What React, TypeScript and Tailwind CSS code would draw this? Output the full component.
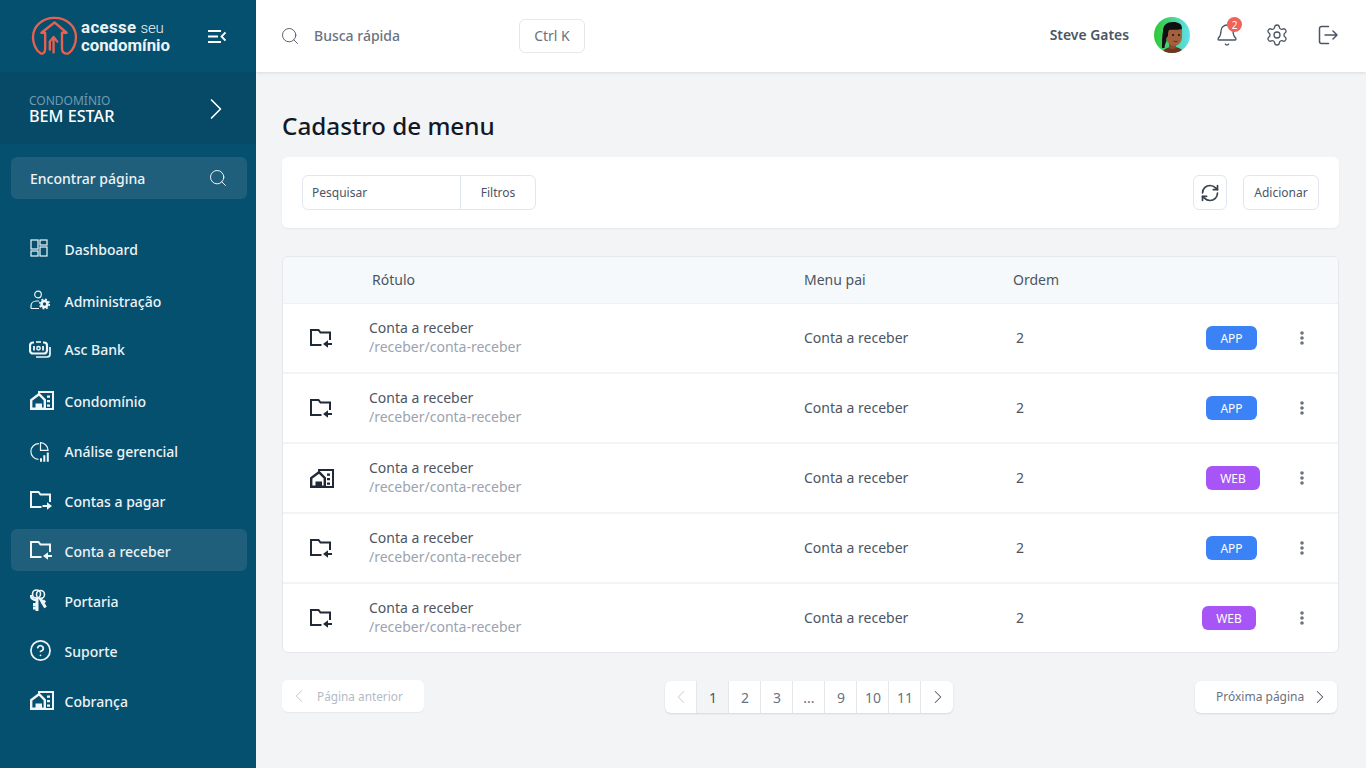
import React from "react";
import { ChevronLeft, ChevronRight, Search, Bell, Settings, CircleHelp, RefreshCw } from "lucide-react";

const FolderIn = ({ dir, className }: { dir: "in" | "out"; className?: string }) => (
  <svg viewBox="0 0 22 19" width="22" height="19" className={className} fill="none">
    <path d="M11.500 16H1V1h7.500l2 2.600H20V11" stroke="currentColor" strokeWidth="2" />
    {dir === "in" ? (
      <>
        <path d="M17 15h5" stroke="currentColor" strokeWidth="2" />
        <path d="M13 15l5-3.800v7.600Z" fill="currentColor" />
      </>
    ) : (
      <>
        <path d="M12.500 15h5" stroke="currentColor" strokeWidth="2" />
        <path d="M22 15l-5-3.800v7.600Z" fill="currentColor" />
      </>
    )}
  </svg>
);

const CondoIcon = ({ className }: { className?: string }) => (
  <svg viewBox="0 0 24 19" width="24" height="19" className={className} fill="none">
    <path d="M9 3.200 1.200 9V17.800H14.800V9L9 3.200Z" stroke="currentColor" strokeWidth="2.400" />
    <path d="M5.500 18.500v-6h6.500v6Z" fill="currentColor" />
    <path d="M9 2.500V1h14v17h-9" stroke="currentColor" strokeWidth="2" />
    <path d="M17 4.500h3v2.300h-3zM17 9h3v2.300h-3zM17 13.500h3v2.300h-3z" fill="currentColor" />
  </svg>
);

const DashIcon = () => (
  <svg viewBox="0 0 18 18" width="18" height="18" fill="none" stroke="currentColor" strokeWidth="1.200">
    <rect x="1" y="1" width="7" height="9" />
    <rect x="10" y="1" width="7" height="5" />
    <rect x="1" y="12" width="7" height="5" />
    <rect x="10" y="8" width="7" height="9" />
  </svg>
);

const AdminIcon = () => (
  <svg viewBox="0 0 20 20" width="20" height="20" fill="none" stroke="currentColor">
    <circle cx="8" cy="4.500" r="3.300" strokeWidth="1.200" />
    <path d="M1 18.500v-2.500c0-3 2.500-5 5.500-5H9M1 18.500h8" strokeWidth="1.200" />
    <circle cx="14.500" cy="14" r="3" strokeWidth="2.600" />
    <circle cx="14.500" cy="14" r="4.800" strokeWidth="1.600" strokeDasharray="1.900 1.870" />
  </svg>
);

const BankIcon = () => (
  <svg viewBox="0 0 22 17" width="22" height="17" fill="none" stroke="currentColor">
    <path d="M5 1.500H4a3 3 0 0 0-3 3v5a3 3 0 0 0 3 3h11a3 3 0 0 0 3-3v-5a3 3 0 0 0-3-3h-1" strokeWidth="2.200" />
    <path d="M7 1h5" strokeWidth="1.600" />
    <path d="M5 5v4.500M14 5v4.500" strokeWidth="1.800" />
    <circle cx="9.500" cy="7.200" r="1.700" strokeWidth="1.500" />
    <path d="M21 6v7c0 2-1 3-3 3H7" strokeWidth="1.700" />
  </svg>
);

const ChartIcon = () => (
  <svg viewBox="0 0 20 20" width="20" height="20" fill="none" stroke="currentColor">
    <path d="M9 1.600A7.800 7.800 0 1 0 8.500 17.300" strokeWidth="1.200" />
    <path d="M10.500.7a7.600 7.600 0 0 1 7.500 7.600h-7.500Z" strokeWidth="1.200" />
    <path d="M10 19.800v-3.500h2v3.500ZM13.300 19.800v-6.500h2v6.500ZM16.800 19.800V10.500h2v9.300Z" fill="currentColor" stroke="none" />
  </svg>
);

const KeysIcon = () => (
  <svg viewBox="0 0 17 22" width="17" height="22" fill="none" stroke="currentColor">
    <circle cx="6.500" cy="5" r="4" strokeWidth="1.600" />
    <circle cx="10.500" cy="5.500" r="4" strokeWidth="1.600" />
    <path d="M7 9v13M3 15.500h4M3 19h4" strokeWidth="3" />
    <path d="M1 6c0 3 2 5 5 5" strokeWidth="2.600" />
    <path d="M10 9l5.500 9.500M15 11.500l-3.200 3.500" strokeWidth="3" />
  </svg>
);

const LogoutIcon = () => (
  <svg viewBox="0 0 20 20" width="20" height="20" fill="none" stroke="currentColor" strokeWidth="1.500" strokeLinecap="round" strokeLinejoin="round">
    <path d="M10.500 1.500H3.500a2 2 0 0 0-2 2v13a2 2 0 0 0 2 2h7" />
    <path d="M7 10h12M15 6l4 4-4 4" />
  </svg>
);

const CollapseIcon = () => (
  <svg viewBox="0 0 18 13" width="18" height="13" fill="none" stroke="currentColor">
    <path d="M0 1h13M0 6.500h10M0 12h13" strokeWidth="2" />
    <path d="M17.500 2.500 13.500 6.500l4 4" strokeWidth="1.800" />
  </svg>
);

const Logo = () => (
  <svg viewBox="0 0 50 46" width="47" height="43" fill="none" stroke="#e8604f" strokeWidth="2.500" strokeLinejoin="round" strokeLinecap="round">
    <path d="M15 19H11L25 8 38 19H33V36C33 40 36 42 40 41 45 38 48 30 48 24 48 12 38 3 25 3 12 3 2 12 2 24 2 30 5 38 10 41 13 42 15 40 15 36Z" />
    <path d="M24 40V24M20 28.500 24 23.500 28 28.500" />
    <path d="M20 29V37" />
  </svg>
);

const Avatar = () => (
  <svg viewBox="0 0 36 36" width="36" height="36">
    <defs>
      <linearGradient id="avbg" x1="0" y1="0" x2="1" y2="0">
        <stop offset="0" stopColor="#2fc832" />
        <stop offset="1" stopColor="#62e0f0" />
      </linearGradient>
      <clipPath id="avclip"><circle cx="18" cy="18" r="18" /></clipPath>
    </defs>
    <g clipPath="url(#avclip)">
      <rect width="36" height="36" fill="url(#avbg)" />
      <path d="M8 36c1-3 4-5 8-6h6c4 1 7 3 8 6Z" fill="#6e3520" />
      <path d="M15 24h7v7c-2 1.500-5 1.500-7 0Z" fill="#8a4c30" />
      <path d="M11 13c0-2 3-3 7-3s10 0 10 3v7c0 5-4 9-8 9s-7-4-8-8Z" fill="#a3603f" />
      <path d="M8 31c0-6 0-12 1-17 0-6 4-9 10-9s9 2 9 7c-4 1.500-10 0-13 1-1 1.500-1 4-1 6-2 2-2 3-1.500 5-1 2-2 4-2 7Z" fill="#111" />
      <circle cx="19" cy="18" r="1" fill="#111" />
      <circle cx="25" cy="18" r="1" fill="#111" />
      <path d="M19.500 24c1.500.8 3 .8 4 0" stroke="#3b1d10" strokeWidth="0.800" fill="none" />
    </g>
  </svg>
);

const menu = [
  { label: "Dashboard", icon: <DashIcon />, cls: "mb-[10px]", w: "pl-[18.500px]" },
  { label: "Administração", icon: <AdminIcon />, cls: "mb-[6px]", w: "pl-[18.500px]" },
  { label: "Asc Bank", icon: <BankIcon />, cls: "mb-[10px]", w: "pl-[18px] pt-[3px]" },
  { label: "Condomínio", icon: <CondoIcon />, cls: "mb-[8px]", w: "pl-[19px]" },
  { label: "Análise gerencial", icon: <ChartIcon />, cls: "mb-[8px]", w: "pl-[18.500px] pt-[3px]" },
  { label: "Contas a pagar", icon: <FolderIn dir="out" />, cls: "mb-[8px]", w: "pl-[19px]" },
  { label: "Conta a receber", icon: <FolderIn dir="in" />, cls: "mb-[8px] bg-[#1f5f7c]", w: "pl-[19px]" },
  { label: "Portaria", icon: <KeysIcon />, cls: "mb-[8px]", w: "pl-[19px]" },
  { label: "Suporte", icon: <CircleHelp size={23} strokeWidth={1.8} />, cls: "mb-[8px]", w: "pl-[18px]" },
  { label: "Cobrança", icon: <CondoIcon />, cls: "", w: "pl-[19px]" },
];

const rows = [
  { icon: "folder", tag: "APP", tagCls: "w-[51px] ml-[4px] mr-[43px] bg-[#3b82f6]" },
  { icon: "folder", tag: "APP", tagCls: "w-[51px] ml-[4px] mr-[43px] bg-[#3b82f6]" },
  { icon: "condo", tag: "WEB", tagCls: "w-[54px] ml-[4px] mr-[40px] bg-[#a855f7]" },
  { icon: "folder", tag: "APP", tagCls: "w-[51px] ml-[4px] mr-[43px] bg-[#3b82f6]" },
  { icon: "folder", tag: "WEB", tagCls: "w-[54px] mr-[44px] bg-[#a855f7]" },
];

const pages = ["1", "2", "3", "...", "9", "10", "11"];

export default function App() {
  return (
    <div className="flex h-[768px] w-[1366px] overflow-hidden bg-[#f3f4f6] font-['Noto_Sans',sans-serif] text-[#4b5563]">
      <aside className="flex h-full w-[256px] shrink-0 flex-col bg-[#06506f] text-white">
        <div className="flex h-[72px] items-center pl-[31px]">
          <Logo />
          <div className="ml-[3px] flex w-[93px] flex-col font-['Roboto',sans-serif] text-[16.800px] leading-[16.500px] text-[#eef3f6]">
            <span className="font-bold tracking-[0.4px]">acesse<span className="ml-[4px] text-[15px] font-light tracking-[-0.2px]">seu</span></span>
            <span className="font-bold">condomínio</span>
          </div>
          <div className="ml-[34px]"><CollapseIcon /></div>
        </div>
        <div className="flex h-[72px] items-center justify-between bg-[#064a68] pl-[29px] pr-[32px] pt-[2px]">
          <div className="flex flex-col">
            <span className="text-[12px] leading-[14px] text-[#6f9bb0]">CONDOMÍNIO</span>
            <span className="text-[16.200px] font-medium leading-[16px] text-white">BEM ESTAR</span>
          </div>
          <ChevronRight size={36} strokeWidth={1.1} className="mr-[-10px]" />
        </div>
        <div className="ml-[11px] mt-[13px] flex h-[42px] w-[236px] items-center justify-between rounded-md bg-[#1f5f7c] pl-[19px] pr-[19px]">
          <span className="text-[14px] font-medium text-[#eef3f6]">Encontrar página</span>
          <Search size={20} strokeWidth={1.100} />
        </div>
        <nav className="ml-[11px] mt-[28px] flex w-[236px] flex-col">
          {menu.map((m) => (
            <div key={m.label} className={`flex h-[42px] items-center rounded-md ${m.cls}`}>
              <div className={`flex w-[53.500px] shrink-0 items-center text-[#f1f5f7] ${m.w}`}>{m.icon}</div>
              <span className="pt-[2px] text-[14px] font-medium text-[#eef3f6]">{m.label}</span>
            </div>
          ))}
        </nav>
      </aside>

      <div className="flex min-w-0 flex-1 flex-col">
        <header className="flex h-[72px] shrink-0 items-center bg-white pl-[25px] pr-[28px] shadow-[0_1px_3px_rgba(0,0,0,0.1)]">
          <Search size={20} strokeWidth={1.100} className="ml-[-1px] text-[#4b5563]" />
          <span className="ml-[14px] w-[205px] pb-[2px] text-[14px] font-medium text-[#6b7280]">Busca rápida</span>
          <div className="flex h-[34px] w-[66px] items-center justify-center rounded-md border border-[#e5e7eb] pb-px text-[14px] text-[#6b7280]">Ctrl K</div>
          <div className="ml-auto flex items-center pb-[2px]">
            <span className="text-[13.900px] font-semibold text-[#4b5563]">Steve Gates</span>
            <div className="ml-[25px]"><Avatar /></div>
            <div className="relative ml-[25px] text-[#4b5563]">
              <Bell size={24} strokeWidth={1.300} />
              <span className="absolute right-[-3px] top-[-6px] flex h-[15px] w-[15px] items-center justify-center rounded-full bg-[#f0625a] text-[10px] leading-none text-white">2</span>
            </div>
            <Settings size={24} strokeWidth={1.300} className="ml-[26px] text-[#4b5563]" />
            <div className="ml-[29px] text-[#4b5563]"><LogoutIcon /></div>
          </div>
        </header>

        <main className="flex flex-1 flex-col pl-[26px] pr-[27px]">
          <h1 className="mt-[37px] text-[24.250px] font-medium leading-[33px] text-[#111827]">Cadastro de menu</h1>

          <section className="mt-[15px] flex h-[71px] items-center justify-between rounded-md bg-white pl-[20px] pr-[20px] shadow-[0_1px_2px_rgba(0,0,0,0.05)]">
            <div className="flex h-[35px] w-[234px] items-center rounded-md border border-[#e2e6ef] text-[12px]">
              <span className="w-[158px] border-r border-[#e2e6ef] pl-[9px] leading-[33px] text-[#4b5563]">Pesquisar</span>
              <span className="flex-1 text-center text-[#4b5563]">Filtros</span>
            </div>
            <div className="flex items-center gap-[16px]">
              <div className="flex h-[35px] w-[34px] items-center justify-center rounded-md border border-[#e2e6ef] text-[#374151]">
                <RefreshCw size={20} strokeWidth={2} />
              </div>
              <div className="flex h-[35px] w-[76px] items-center justify-center rounded-md border border-[#e2e6ef] text-[12px] text-[#4b5563]">Adicionar</div>
            </div>
          </section>

          <section className="mt-[28px] w-[1057px] overflow-hidden rounded-md border border-[#e5e7eb] bg-white">
            <div className="flex h-[47px] items-center border-b border-[#eef0f3] bg-[#f6f9fc] pb-[2px] text-[14px] text-[#4b5563]">
              <span className="w-[521px] pl-[89px]">Rótulo</span>
              <span className="w-[209px]">Menu pai</span>
              <span>Ordem</span>
            </div>
            {rows.map((r, i) => (
              <div key={i} className={`flex items-center ${i < rows.length - 1 ? "h-[70px] border-b-2 border-[#f3f4f6]" : "h-[68px]"}`}>
                <div className="flex w-[86px] shrink-0 pl-[27px] text-[#1f2937]">
                  {r.icon === "folder" ? <FolderIn dir="in" /> : <CondoIcon />}
                </div>
                <div className="flex w-[435px] flex-col pb-[2px] text-[14px] leading-[19px]">
                  <span className="text-[#4b5563]">Conta a receber</span>
                  <span className="text-[#9ca3af]">/receber/conta-receber</span>
                </div>
                <span className="w-[212px] pb-[2px] text-[14px] text-[#4b5563]">Conta a receber</span>
                <span className="w-[186px] pb-[2px] text-[14px] text-[#4b5563]">2</span>
                <span className={`flex h-[24px] items-center justify-center rounded-md pt-px text-[12px] text-white ${r.tagCls}`}>{r.tag}</span>
                <svg viewBox="0 0 4 14" width="4" height="14" fill="#6b7280">
                  <circle cx="2" cy="2" r="1.800" />
                  <circle cx="2" cy="7" r="1.800" />
                  <circle cx="2" cy="12" r="1.800" />
                </svg>
              </div>
            ))}
          </section>

          <div className="mt-[27px] flex items-start justify-between pr-[2px]">
            <div className="flex h-[32px] w-[142px] items-center rounded-md bg-white pl-[6px] text-[11.800px] text-[#b4bac6] shadow-[0_1px_1px_rgba(0,0,0,0.05)]">
              <ChevronLeft size={22} strokeWidth={1.100} className="text-[#cbd0d9]" />
              <span className="ml-[7px] pt-px">Página anterior</span>
            </div>
            <div className="mr-[2px] mt-px flex h-[32px] items-center rounded-md bg-white text-[14px] text-[#6b7280] shadow-[0_1px_2px_rgba(0,0,0,0.12)]">
              <div className="flex h-full w-[32px] items-center justify-center border-r border-[#e5e7eb] pl-[2px] text-[#cbd0d9]"><ChevronLeft size={22} strokeWidth={1.100} /></div>
              {pages.map((p, i) => (
                <div key={p} className={`flex h-full w-[32px] items-center justify-center border-r border-[#e5e7eb] pl-[2px] ${i === 0 ? "bg-[#f3f4f6] text-[#4b5563]" : ""}`}>{p}</div>
              ))}
              <div className="flex h-full w-[32px] items-center justify-center pl-[2px] text-[#4b5563]"><ChevronRight size={22} strokeWidth={1.100} /></div>
            </div>
            <div className="mt-px flex h-[32px] w-[142px] items-center rounded-md bg-white pl-[21px] text-[12px] text-[#6b7280] shadow-[0_1px_2px_rgba(0,0,0,0.12)]">
              <span>Próxima página</span>
              <ChevronRight size={22} strokeWidth={1.100} className="ml-[5px] text-[#4b5563]" />
            </div>
          </div>
        </main>
      </div>
    </div>
  );
}
